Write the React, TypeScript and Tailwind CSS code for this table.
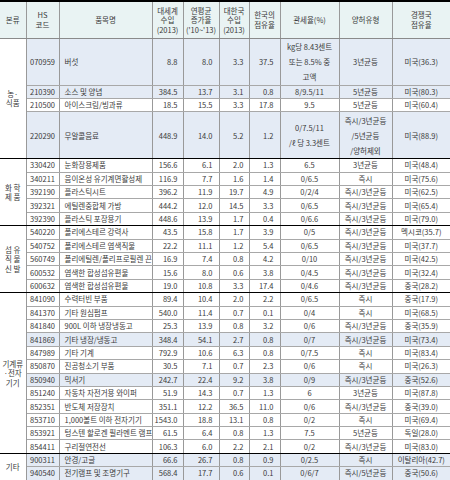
import type { ReactNode } from "react"

type Row = {
  code: string
  name: string
  world: string
  growth: string
  korea: string
  share: string
  tariff: string[]
  deal: string[]
  rival: string
  hl?: boolean
  tall?: boolean
}

type Group = { label: string[]; rows: Row[] }

const groups: Group[] = [
  {
    label: ["농·", "식품"],
    rows: [
      { code: "070959", name: "버섯", world: "8.8", growth: "8.0", korea: "3.3", share: "37.5", tariff: ["kg당 8.43센트", "또는 8.5% 중", "고액"], deal: ["3년균등"], rival: "미국(36.3)", hl: true, tall: true },
      { code: "210390", name: "소스 및 양념", world: "384.5", growth: "13.7", korea: "3.1", share: "0.8", tariff: ["8/9.5/11"], deal: ["5년균등"], rival: "미국(80.3)", hl: true },
      { code: "210500", name: "아이스크림/빙과류", world: "18.5", growth: "15.5", korea: "3.3", share: "17.8", tariff: ["9.5"], deal: ["5년균등"], rival: "미국(60.4)" },
      { code: "220290", name: "무알콜음료", world: "448.9", growth: "14.0", korea: "5.2", share: "1.2", tariff: ["0/7.5/11", "/ℓ 당 3.3센트"], deal: ["즉시/3년균등", "/5년균등", "/양허제외"], rival: "미국(88.9)", hl: true, tall: true },
    ],
  },
  {
    label: ["화 학", "제 품"],
    rows: [
      { code: "330420", name: "눈화장용제품", world: "156.6", growth: "6.1", korea: "2.0", share: "1.3", tariff: ["6.5"], deal: ["3년균등"], rival: "미국(48.4)" },
      { code: "340211", name: "음이온성 유기계면활성제", world: "116.9", growth: "7.7", korea: "1.6", share: "1.4", tariff: ["0/6.5"], deal: ["즉시"], rival: "미국(75.6)" },
      { code: "392190", name: "플라스틱시트", world: "396.2", growth: "11.9", korea: "19.7", share: "4.9", tariff: ["0/2/4"], deal: ["즉시/3년균등"], rival: "미국(62.5)" },
      { code: "392321", name: "에틸렌중합체 가방", world: "444.2", growth: "12.0", korea: "14.5", share: "3.3", tariff: ["0/6.5"], deal: ["즉시/3년균등"], rival: "미국(65.4)" },
      { code: "392390", name: "플라스틱 포장용기", world: "448.6", growth: "13.9", korea: "1.7", share: "0.4", tariff: ["0/6.6"], deal: ["즉시/3년균등"], rival: "미국(79.0)" },
    ],
  },
  {
    label: ["섬 유", "직 물", "신 발"],
    rows: [
      { code: "540220", name: "폴리에스테르 강력사", world: "43.5", growth: "15.8", korea: "1.7", share: "3.9", tariff: ["0/5"], deal: ["즉시/3년균등"], rival: "멕시코(35.7)" },
      { code: "540752", name: "폴리에스테르 염색직물", world: "22.2", growth: "11.1", korea: "1.2", share: "5.4", tariff: ["0/6.5"], deal: ["즉시/3년균등"], rival: "미국(37.7)" },
      { code: "560749", name: "폴리에틸렌/폴리프로필렌 끈", world: "16.9", growth: "7.4", korea: "0.8", share: "4.2", tariff: ["0/10"], deal: ["즉시/3년균등"], rival: "미국(42.5)" },
      { code: "600532", name: "염색한 합성섬유편물", world: "15.6", growth: "8.0", korea: "0.6", share: "3.8", tariff: ["0/4.5"], deal: ["즉시/3년균등"], rival: "미국(32.4)" },
      { code: "600632", name: "염색한 합성섬유편물", world: "19.0", growth: "10.8", korea: "3.3", share: "17.4", tariff: ["0/4.6"], deal: ["즉시/3년균등"], rival: "중국(28.2)" },
    ],
  },
  {
    label: ["기계류", "·전자", "기기"],
    rows: [
      { code: "841090", name: "수력터빈 부품", world: "89.4", growth: "10.4", korea: "2.0", share: "2.2", tariff: ["0/6.5"], deal: ["즉시"], rival: "중국(17.9)" },
      { code: "841370", name: "기타 원심펌프", world: "540.0", growth: "11.4", korea: "0.7", share: "0.1", tariff: ["0/4"], deal: ["즉시"], rival: "미국(68.5)" },
      { code: "841840", name: "900L 이하 냉장냉동고", world: "25.3", growth: "13.9", korea: "0.8", share: "3.2", tariff: ["0/6"], deal: ["즉시/3년균등"], rival: "중국(35.9)" },
      { code: "841869", name: "기타 냉장/냉동고", world: "348.4", growth: "54.1", korea: "2.7", share: "0.8", tariff: ["0/7"], deal: ["즉시/3년균등"], rival: "미국(73.4)", hl: true },
      { code: "847989", name: "기타 기계", world: "792.9", growth: "10.6", korea: "6.3", share: "0.8", tariff: ["0/7.5"], deal: ["즉시"], rival: "미국(83.4)" },
      { code: "850870", name: "진공청소기 부품", world: "30.5", growth: "7.1", korea: "0.7", share: "2.3", tariff: ["0/6"], deal: ["즉시"], rival: "미국(26.3)" },
      { code: "850940", name: "믹서기", world: "242.7", growth: "22.4", korea: "9.2", share: "3.8", tariff: ["0/9"], deal: ["즉시/3년균등"], rival: "중국(52.6)", hl: true },
      { code: "851240", name: "자동차 자전거용 와이퍼", world: "51.9", growth: "14.3", korea: "0.7", share: "1.3", tariff: ["6"], deal: ["3년균등"], rival: "미국(87.8)" },
      { code: "852351", name: "반도체 저장장치", world: "351.1", growth: "12.2", korea: "36.5", share: "11.0", tariff: ["0/6"], deal: ["즉시/3년균등"], rival: "중국(39.0)" },
      { code: "853710", name: "1,000볼트 이하 전자기기", world: "1543.0", growth: "18.8", korea: "13.1", share: "0.8", tariff: ["0/2"], deal: ["즉시"], rival: "미국(69.4)" },
      { code: "853921", name: "텅스텐 할로겐 필라멘트 램프", world: "61.5", growth: "6.4", korea: "0.8", share: "1.3", tariff: ["7.5"], deal: ["5년균등"], rival: "독일(28.0)" },
      { code: "854411", name: "구리절연전선", world: "106.3", growth: "6.0", korea: "2.2", share: "2.1", tariff: ["0/2"], deal: ["즉시/3년균등"], rival: "미국(83.0)" },
    ],
  },
  {
    label: ["기타"],
    rows: [
      { code: "900311", name: "안경/고글", world: "66.6", growth: "26.7", korea: "0.8", share: "0.9", tariff: ["0/2.5"], deal: ["즉시"], rival: "이탈리아(42.7)", hl: true },
      { code: "940540", name: "전기램프 및 조명기구", world: "568.4", growth: "17.7", korea: "0.6", share: "0.1", tariff: ["0/6/7"], deal: ["즉시/5년균등"], rival: "중국(50.6)", hl: true },
    ],
  },
]

const widths = [26, 33, 93, 31, 36, 30, 31, 59, 53, 58]

function Lines({ items }: { items: string[] }) {
  return (
    <>
      {items.map((t, i) => (
        <div key={i} className="whitespace-nowrap">{t}</div>
      ))}
    </>
  )
}

function Head({ children, last }: { children: ReactNode; last?: boolean }) {
  return (
    <th
      className={
        "bg-[#e9f3f3] font-normal text-center align-middle leading-[9.5px] border-t-2 border-t-black border-b border-b-[#8a8a8a] " +
        (last ? "" : "border-r border-r-[#999]")
      }
    >
      {children}
    </th>
  )
}

export default function App() {
  return (
    <div className="w-[450px] h-[480px] bg-white overflow-hidden text-[#3a3a3a]" style={{ fontFamily: '"Noto Sans CJK KR", "Noto Sans", sans-serif' }}>
      <table className="w-[450px] table-fixed border-collapse text-[7.5px]">
        <colgroup>
          {widths.map((w, i) => (
            <col key={i} style={{ width: w }} />
          ))}
        </colgroup>
        <thead>
          <tr className="h-[37px]">
            <Head>본류</Head>
            <Head>HS<br />코드</Head>
            <Head>품목명</Head>
            <Head>대세계<br />수입<br />(2013)</Head>
            <Head>연평균<br />증가율<br />('10~'13)</Head>
            <Head>대한국<br />수입<br />(2013)</Head>
            <Head>한국의<br />점유율</Head>
            <Head>관세율(%)</Head>
            <Head>양허유형</Head>
            <Head last>경쟁국<br />점유율</Head>
          </tr>
        </thead>
        <tbody>
          {groups.map((g) =>
            g.rows.map((r, i) => {
              const end = i === g.rows.length - 1
              const line = end ? "border-b border-b-black" : "border-b border-b-[#a8a8a8]"
              const bg = r.hl ? "bg-[#e4ebf5]" : "bg-white"
              const cell = `${line} ${bg} border-r border-r-[#999] p-0 align-middle whitespace-nowrap overflow-hidden`
              return (
                <tr key={r.code} className={r.tall ? "h-[47px] leading-[15px]" : "h-[13.4px] leading-[12px]"}>
                  {i === 0 && (
                    <td
                      rowSpan={g.rows.length}
                      className="border-b border-b-black border-r border-r-[#999] bg-white text-center align-middle leading-[9.5px] p-0"
                    >
                      <Lines items={g.label} />
                    </td>
                  )}
                  <td className={`${cell} text-center`}>{r.code}</td>
                  <td className={`${cell} text-left pl-[5px]`}>{r.name}</td>
                  <td className={`${cell} text-right pr-[5px]`}>{r.world}</td>
                  <td className={`${cell} text-right pr-[6px]`}>{r.growth}</td>
                  <td className={`${cell} text-right pr-[5px]`}>{r.korea}</td>
                  <td className={`${cell} text-right pr-[6px]`}>{r.share}</td>
                  <td className={`${cell} text-center`}><Lines items={r.tariff} /></td>
                  <td className={`${cell} text-center`}><Lines items={r.deal} /></td>
                  <td className={`${line} ${bg} p-0 align-middle text-center whitespace-nowrap`}>{r.rival}</td>
                </tr>
              )
            })
          )}
        </tbody>
      </table>
      <div className="h-[2px] w-full bg-black -mt-px" />
    </div>
  )
}
